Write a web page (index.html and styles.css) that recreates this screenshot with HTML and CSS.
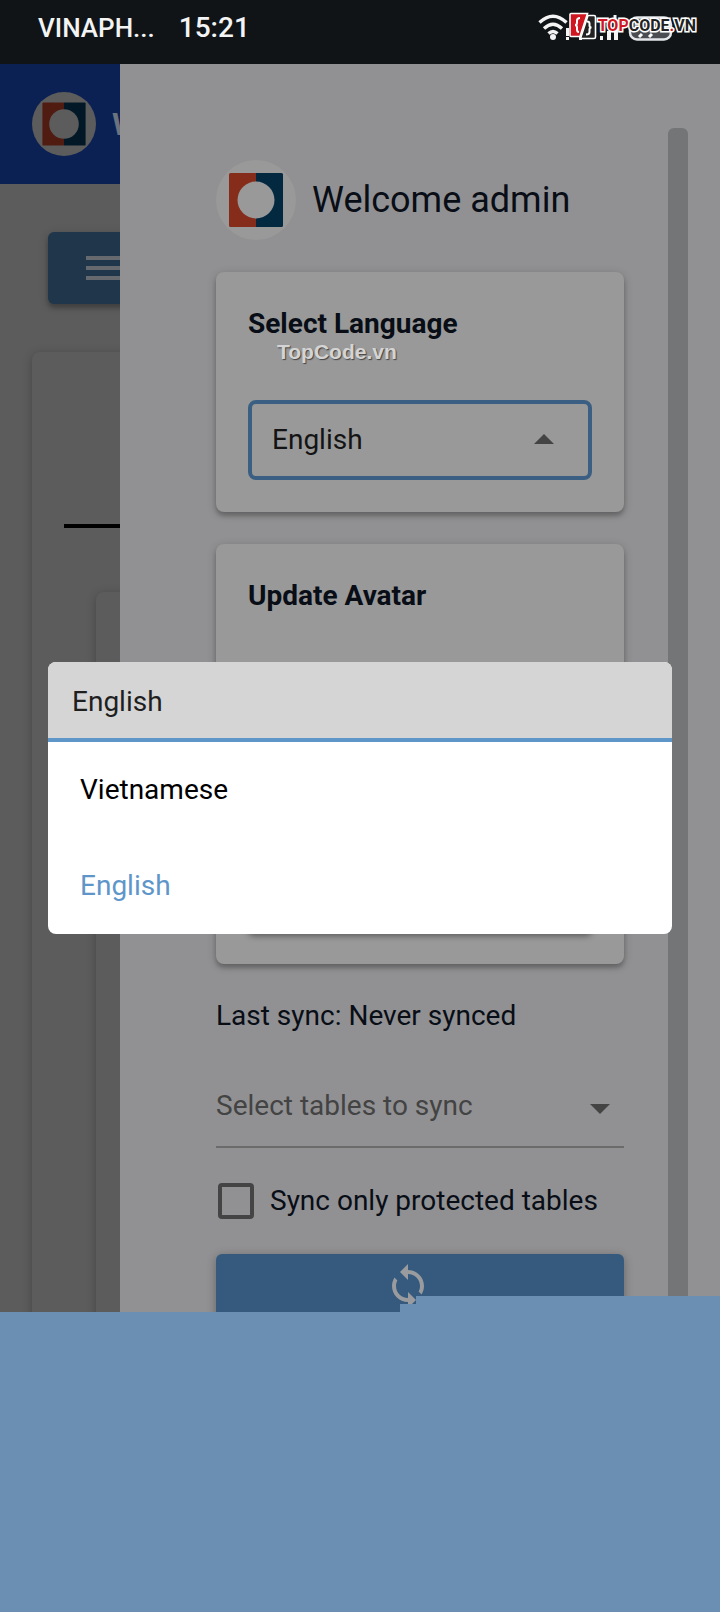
FILE: index.html
```html
<!DOCTYPE html>
<html lang="en">
<head>
<meta charset="utf-8">
<meta name="viewport" content="width=device-width, initial-scale=1">
<title>Settings</title>
<link rel="stylesheet" href="styles.css">
</head>
<body>
<div class="screen">
  <header class="status">
    <span class="carrier">VINAPH...</span>
    <time class="clock">15:21</time>
    <div class="indicators">
      <svg class="signals" viewBox="0 0 140 32" aria-hidden="true">
        <g fill="none" stroke="#f4f4f4" stroke-width="3.4">
          <path d="M1.500 10.500Q15-2 28.500 10.500"/>
          <path d="M6 16.500Q15 8 24 16.500"/>
          <path d="M10.500 21.500Q15 17.500 19.500 21.500"/>
        </g>
        <circle cx="15" cy="25" r="3" fill="#f4f4f4"/>
        <path d="M28 16h3v8h-3zM28 25h3v3h-3zM41 25h3v3h-3zM62 24h3v4h-3zM69 19h4v9h-4zM76 14h4v14h-4z" fill="#f4f4f4"/>
        <path d="M77 3v8" stroke="#f4f4f4" stroke-width="3"/>
        <rect x="92" y="5.500" width="41" height="22" rx="7" fill="#4a4d52" stroke="#e4e6ea" stroke-width="2.500"/>
        <path d="M104 22l-3 3M114 22l-3 3" stroke="#fff" stroke-width="3"/>
      </svg>
      <div class="brand">
        <svg class="brand-mark" viewBox="0 0 28 28" aria-hidden="true">
          <path d="M2 1.500h16.500L11 24.500H2Q1 24.500 1 23.500v-21Q1 1.500 2 1.500z" fill="#d01620" stroke="#fff" stroke-width="1.600"/>
          <path d="M19 3.500h6q1.500 0 1.500 1.500v20q0 1.500-1.500 1.500H11.500z" fill="#222" stroke="#fff" stroke-width="1.600"/>
          <path d="M11 6Q8 6 8 8.500v2Q8 13 6 13q2 0 2 2.500v2Q8 20 10 20" fill="none" stroke="#fff" stroke-width="2"/>
          <path d="M18 9.500q2.500 0 2.500 2v2q0 2 2 2-2 0-2 2v2.500q0 2.500-3.500 2.500" fill="none" stroke="#fff" stroke-width="2"/>
        </svg>
        <span class="brand-name"><span class="red">TOP</span>CODE<span class="red">.</span>VN</span>
      </div>
    </div>
  </header>

  <div class="stage">
    <main class="page">
      <div class="page-bar">
        <svg class="page-logo" viewBox="0 0 80 80" aria-hidden="true">
          <circle cx="40" cy="40" r="40" fill="#5c5c5c"/>
          <path d="M14.500 13H40v54H14.500q-1.500 0-1.500-1.500v-51q0-1.500 1.500-1.500z" fill="#501b10"/>
          <path d="M40 13h25.500q1.500 0 1.500 1.500v51q0 1.500-1.500 1.500H40z" fill="#021827"/>
          <circle cx="40" cy="40" r="18.500" fill="#5c5c5c"/>
        </svg>
        <span class="page-title">W</span>
      </div>
      <div class="page-body">
        <button class="menu-button" type="button" aria-label="Menu">
          <svg class="icon" viewBox="0 0 24 24" fill="#66696d" aria-hidden="true"><path d="M3 18h18v-2H3v2zm0-5h18v-2H3v2zm0-7v2h18V6H3z"/></svg>
        </button>
        <section class="page-card">
          <hr class="rule">
          <div class="page-inner"></div>
        </section>
      </div>
    </main>

    <aside class="drawer">
      <div class="profile">
        <svg class="avatar" viewBox="0 0 80 80" aria-hidden="true">
          <circle cx="40" cy="40" r="40" fill="#999"/>
          <path d="M14.500 13H40v54H14.500q-1.500 0-1.500-1.500v-51q0-1.500 1.500-1.500z" fill="#852d1a"/>
          <path d="M40 13h25.500q1.500 0 1.500 1.500v51q0 1.500-1.500 1.500H40z" fill="#032941"/>
          <circle cx="40" cy="40" r="18.500" fill="#999"/>
        </svg>
        <h1 class="welcome">Welcome admin</h1>
      </div>

      <section class="card">
        <label class="card-title" for="language">Select Language</label>
        <span class="watermark">TopCode.vn</span>
        <div class="field outlined">
          <select id="language" class="select">
            <option>Vietnamese</option>
            <option selected>English</option>
          </select>
          <svg class="icon arrow" viewBox="0 0 24 24" fill="#444" aria-hidden="true"><path d="M7 14l5-5 5 5z"/></svg>
        </div>
      </section>

      <section class="card avatar-card">
        <h2 class="card-title">Update Avatar</h2>
        <div class="upload"></div>
      </section>

      <div class="sync">
        <p class="last-sync">Last sync: Never synced</p>
        <div class="field underlined">
          <select class="select" aria-label="Select tables to sync">
            <option>Select tables to sync</option>
          </select>
          <svg class="icon arrow" viewBox="0 0 24 24" fill="#444" aria-hidden="true"><path d="M7 10l5 5 5-5z"/></svg>
        </div>
        <label class="check"><input class="check-box" type="checkbox">Sync only protected tables</label>
        <button class="sync-button" type="button" aria-label="Sync">
          <svg class="icon" viewBox="0 0 24 24" fill="#999b9e" aria-hidden="true"><path d="M12 4V1L8 5l4 4V6c3.310 0 6 2.690 6 6 0 1.010-.25 1.970-.7 2.800l1.460 1.460C19.540 15.030 20 13.570 20 12c0-4.420-3.580-8-8-8zm0 14c-3.310 0-6-2.690-6-6 0-1.010.25-1.970.7-2.800L5.240 7.740C4.460 8.970 4 10.430 4 12c0 4.420 3.580 8 8 8v3l4-4-4-4v3z"/></svg>
        </button>
      </div>
      <div class="scrollbar"></div>
    </aside>
  </div>

  <div class="bottom-fill"></div>

  <div class="modal">
    <div class="dialog" role="dialog" aria-label="Language">
      <input class="dialog-input" type="text" value="English" aria-label="Language" readonly>
      <div class="options" role="listbox" aria-label="Languages">
        <button class="option" type="button" role="option" aria-selected="false">Vietnamese</button>
        <button class="option active" type="button" role="option" aria-selected="true">English</button>
      </div>
    </div>
  </div>
</div>
</body>
</html>
```

FILE: styles.css
```css
* {
  box-sizing: border-box;
}

body {
  margin: 0;
  font-family: Roboto, "Liberation Sans", sans-serif;
  font-size: 28px;
  line-height: 40px;
  color: #080d16;
}

h1, h2, p {
  margin: 0;
}

button, input, select {
  font: inherit;
  margin: 0;
}

.screen {
  position: relative;
  display: flex;
  flex-direction: column;
  height: 100vh;
  overflow: hidden;
  background: #5c5c5c;
}

/* Status bar */
.status {
  display: flex;
  flex: none;
  align-items: center;
  gap: 24px;
  height: 64px;
  padding: 0 24px 8px 38px;
  background: #101417;
  color: #f4f4f4;
  font-weight: 500;
}

.carrier {
  font-size: 26px;
}

.clock {
  font-size: 28px;
}

.indicators {
  position: relative;
  display: flex;
  width: 158px;
  margin-left: auto;
}

.signals {
  width: 140px;
  height: 32px;
}

.brand {
  position: absolute;
  top: 0;
  right: 0;
  display: flex;
  align-items: center;
  gap: 1px;
}

.brand-mark {
  width: 28px;
  height: 28px;
}

.brand-name {
  color: #222;
  font-size: 16px;
  font-weight: 700;
  line-height: 28px;
  -webkit-text-stroke: 3px #fff;
  paint-order: stroke fill;
}

.red {
  color: #d01620;
}

/* Page and drawer share one grid cell */
.stage {
  display: grid;
  flex: 1;
  min-height: 0;
  grid-template-columns: minmax(0, 1fr);
  grid-template-rows: minmax(0, 1fr);
}

.page,
.drawer {
  grid-area: 1 / 1;
}

.page {
  display: flex;
  flex-direction: column;
}

.page-bar {
  display: flex;
  align-items: center;
  gap: 16px;
  height: 120px;
  padding: 0 32px;
  background: #0c2153;
}

.page-logo {
  width: 64px;
  height: 64px;
}

.page-title {
  color: #6d727f;
  font-size: 32px;
  font-weight: 700;
}

.page-body {
  display: flex;
  flex: 1;
  flex-direction: column;
  align-items: flex-start;
  gap: 48px;
  padding: 48px 32px 0;
}

.menu-button {
  height: 72px;
  margin-left: 16px;
  padding: 12px 32px;
  border: 0;
  border-radius: 6px;
  background: #20364a;
  box-shadow: 0 2px 10px rgba(0, 0, 0, .2), 0 4px 4px rgba(0, 0, 0, .2);
}

.icon {
  display: block;
  width: 48px;
  height: 48px;
}

.page-card {
  display: flex;
  flex: 1;
  flex-direction: column;
  align-self: stretch;
  gap: 64px;
  padding: 172px 32px 0;
  border-radius: 8px;
  box-shadow: 0 2px 10px rgba(0, 0, 0, .25);
}

.rule {
  width: 100%;
  margin: 0;
  border: 0;
  border-top: 4px solid #000;
}

.page-inner {
  flex: 1;
  margin-left: 32px;
  border-radius: 8px;
  box-shadow: 0 2px 10px rgba(0, 0, 0, .25);
}

/* Drawer */
.drawer {
  position: relative;
  display: flex;
  flex-direction: column;
  gap: 32px;
  margin-left: 120px;
  padding: 96px 96px 0;
  overflow: hidden;
  background: #919193;
}

.scrollbar {
  position: absolute;
  top: 64px;
  right: 32px;
  bottom: 0;
  width: 20px;
  border-radius: 6px;
  background: #737577;
}

.profile {
  display: flex;
  flex: none;
  align-items: center;
  gap: 16px;
}

.avatar {
  width: 80px;
  height: 80px;
}

.welcome {
  font-size: 36px;
  font-weight: 400;
}

.card {
  position: relative;
  display: flex;
  flex: none;
  flex-direction: column;
  justify-content: space-between;
  gap: 56px;
  padding: 32px;
  border-radius: 8px;
  background: #999;
  box-shadow: 0 2px 10px rgba(0, 0, 0, .2), 0 4px 4px rgba(0, 0, 0, .2);
}

.avatar-card {
  min-height: 420px;
}

.card-title {
  font-size: 28px;
  font-weight: 700;
}

.upload {
  height: 72px;
  border-radius: 6px;
  background: #355a7e;
  box-shadow: 0 4px 6px rgba(0, 0, 0, .4);
}

.watermark {
  position: absolute;
  top: 68px;
  left: 61px;
  color: #d4d4d4;
  font-family: "Liberation Sans", sans-serif;
  font-size: 21px;
  font-weight: 700;
  line-height: 24px;
  text-shadow: 1px 1px 1px #444;
}

.field {
  display: grid;
  align-items: center;
}

.select {
  grid-area: 1 / 1;
  width: 100%;
  border: 0;
  outline: 0;
  appearance: none;
  background: transparent;
  color: #141414;
}

.arrow {
  grid-area: 1 / 1;
  justify-self: end;
  pointer-events: none;
}

.outlined .select {
  height: 80px;
  padding: 0 20px;
  border: 4px solid #3b5f82;
  border-radius: 8px;
}

.outlined .arrow {
  margin-right: 24px;
}

.sync {
  display: flex;
  flex: none;
  flex-direction: column;
}

.underlined .select {
  height: 112px;
  padding: 30px 0 0;
  border-bottom: 2px solid #6b6b6c;
  color: #434343;
}

.underlined .arrow {
  margin-top: 32px;
}

.check {
  display: flex;
  align-items: center;
  gap: 16px;
  height: 74px;
  margin: 16px 0;
  padding-left: 2px;
}

.check-box {
  flex: none;
  width: 36px;
  height: 36px;
  border: 4px solid #444;
  border-radius: 4px;
  appearance: none;
}

.sync-button {
  display: flex;
  justify-content: center;
  padding: 8px 56px 56px 32px;
  border: 0;
  border-radius: 6px;
  background: #355a7e;
  box-shadow: 0 2px 10px rgba(0, 0, 0, .3);
}

/* Solid area with a stepped top edge */
.bottom-fill {
  position: absolute;
  right: 0;
  bottom: 0;
  left: 0;
  height: 316px;
  background: #6b8fb2;
  clip-path: polygon(0 16px, 400px 16px, 400px 8px, 416px 8px, 416px 0, 100% 0, 100% 100%, 0 100%);
}

/* Language picker */
.modal {
  position: absolute;
  inset: 0;
  display: flex;
  flex-direction: column;
  justify-content: center;
  padding: 0 48px 16px;
}

.dialog {
  overflow: hidden;
  border-radius: 8px;
  background: #fff;
}

.dialog-input {
  display: block;
  width: 100%;
  height: 80px;
  padding: 2px 24px 0;
  border: 0;
  border-bottom: 4px solid #5f96ca;
  border-radius: 0;
  outline: 0;
  background: #d5d5d5;
  color: #1f1f1f;
}

.options {
  display: flex;
  flex-direction: column;
}

.option {
  height: 96px;
  padding: 0 32px;
  border: 0;
  background: transparent;
  color: #000;
  text-align: left;
}

.active {
  color: #5f96ca;
}
```
